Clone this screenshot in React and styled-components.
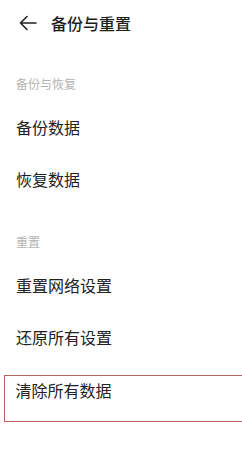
import styled, { createGlobalStyle } from "styled-components";

const GlobalStyle = createGlobalStyle`
  html, body {
    margin: 0;
    padding: 0;
    background: #ffffff;
    overflow: hidden;
  }
  body {
    font-family: "Noto Sans CJK SC", "Noto Sans", sans-serif;
  }
`;

const sections = [
  {
    title: "备份与恢复",
    items: [{ label: "备份数据" }, { label: "恢复数据" }],
  },
  {
    title: "重置",
    items: [
      { label: "重置网络设置" },
      { label: "还原所有设置" },
      { label: "清除所有数据", marked: true },
    ],
  },
];

const BackIcon = () => (
  <svg width="18" height="16" viewBox="0 0 18 16" fill="none">
    <path
      d="M17 8H1.5M8 1.5L1.5 8L8 14.5"
      stroke="#222"
      strokeWidth="1.6"
      strokeLinecap="round"
      strokeLinejoin="round"
    />
  </svg>
);

const App = () => {
  return (
    <Page>
      <GlobalStyle />
      <Header>
        <BackButton>
          <BackIcon />
        </BackButton>
        <Title>备份与重置</Title>
      </Header>
      {sections.map((section) => (
        <Section key={section.title}>
          <SectionLabel>{section.title}</SectionLabel>
          {section.items.map((item) =>
            item.marked ? (
              <MarkedRow key={item.label}>{item.label}</MarkedRow>
            ) : (
              <Row key={item.label}>{item.label}</Row>
            )
          )}
        </Section>
      ))}
    </Page>
  );
};

const Page = styled.div`
  width: 242px;
  height: 455px;
  background: #fff;
  color: #222;
  overflow: hidden;
`;

const Header = styled.header`
  height: 45px;
  display: flex;
  align-items: center;
  padding-left: 19px;
  gap: 14px;
`;

const BackButton = styled.div`
  display: flex;
  align-items: center;
  width: 18px;
  height: 16px;
`;

const Title = styled.h1`
  margin: 0;
  font-size: 16px;
  font-weight: 500;
  line-height: 20px;
  color: #1e1e1e;
`;

const Section = styled.section`
  display: flex;
  flex-direction: column;
`;

const SectionLabel = styled.div`
  padding: 30px 0 8px 16px;
  font-size: 12px;
  line-height: 18px;
  color: #b3b3b3;

  ${Section} + ${Section} & {
    padding-top: 28px;
  }
`;

const Row = styled.div`
  height: 52px;
  display: flex;
  align-items: center;
  padding-left: 16px;
  font-size: 16px;
  color: #222;
`;

const MarkedRow = styled.div`
  height: 47px;
  box-sizing: border-box;
  margin: 12px 0 0 4px;
  border: 1.5px solid #b4645f;
  border-right: none;
  padding: 5px 0 0 10.5px;
  font-size: 16px;
  line-height: 18px;
  color: #222;
`;

export default App;
